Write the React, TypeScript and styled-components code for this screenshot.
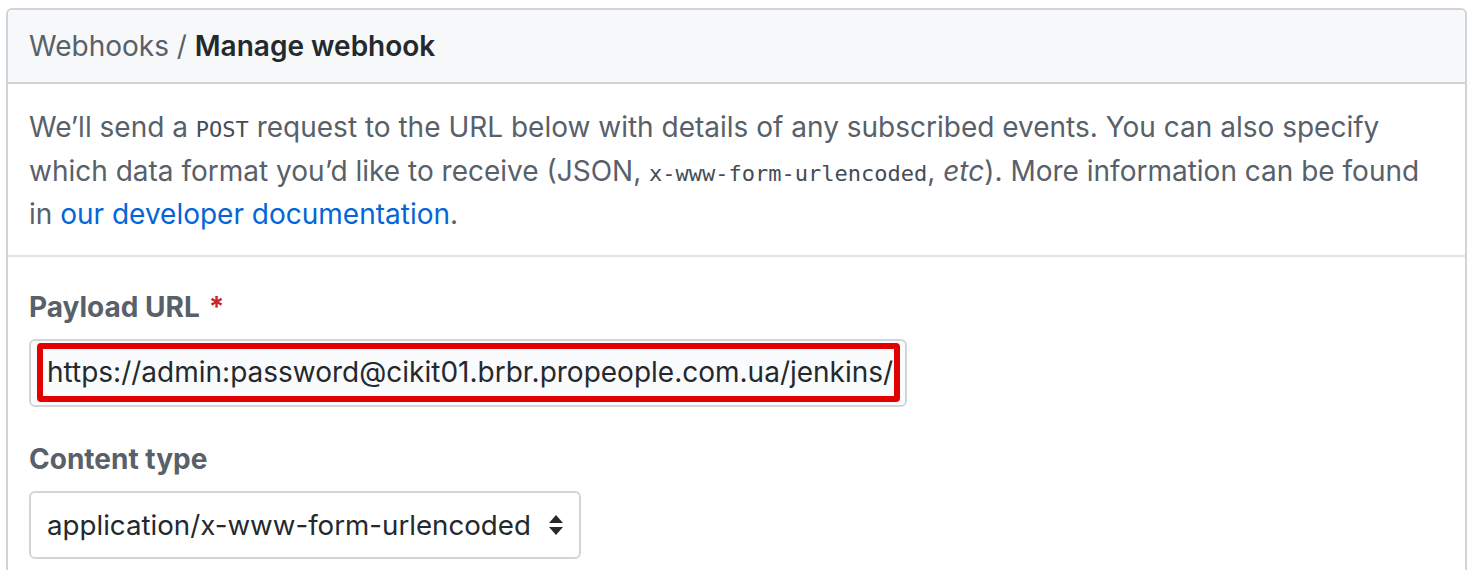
import React from "react";
import styled, { createGlobalStyle } from "styled-components";

const Global = createGlobalStyle`
  html, body { margin: 0; padding: 0; background: #ffffff; }
  body { font-family: Inter, "Liberation Sans", sans-serif; -webkit-font-smoothing: antialiased; }
`;

const Page = styled.div`
  padding: 8px 3px 0 6px;
  height: 570px;
  box-sizing: border-box;
  overflow: hidden;
`;

const Box = styled.div`
  border: 2px solid #d1d5da;
  border-radius: 6px;
  background: #fff;
  min-height: 640px;
`;

const Header = styled.div`
  background: #f6f8fa;
  border-bottom: 2px solid #d1d5da;
  border-radius: 6px 6px 0 0;
  height: 72px;
  display: flex;
  align-items: center;
  padding: 0 21px;
  font-size: 28px;
  color: #586069;
`;

const Strong = styled.strong`
  color: #24292e;
  font-weight: 600;
`;

const Section = styled.div<{ $divider?: boolean }>`
  padding: ${(p) => (p.$divider ? "22px 30px 18px 21px" : "30px 21px 0")};
  border-bottom: ${(p) => (p.$divider ? "2px solid #e1e4e8" : "none")};
`;

const Description = styled.p`
  margin: 0;
  font-size: 28px;
  line-height: 43.5px;
  color: #586069;
`;

const Code = styled.code`
  font-family: "DejaVu Sans Mono", monospace;
  font-size: 22px;
  line-height: 1;
  color: #444d56;
`;

const Link = styled.a`
  color: #0366d6;
  text-decoration: none;
`;

const Field = styled.div`
  display: flex;
  flex-direction: column;
  align-items: flex-start;
  & + & {
    margin-top: 32px;
  }
`;

const Label = styled.label`
  font-size: 28px;
  font-weight: 700;
  line-height: 40px;
  color: #586069;
  margin-bottom: 12px;
`;

const Required = styled.span`
  color: #cb2431;
  margin-left: 9px;
`;

const InputFrame = styled.div`
  width: 878px;
  height: 68px;
  box-sizing: border-box;
  border: 2px solid #d1d5da;
  border-radius: 6px;
  background: #fafbfc;
  padding: 2px 5px 3px 6px;
`;

const Highlight = styled.div`
  height: 100%;
  box-sizing: border-box;
  border: 6px solid #e30000;
  border-radius: 4px;
  background: #fafbfc;
  display: flex;
  align-items: center;
  padding-left: 4px;
  overflow: hidden;
  white-space: nowrap;
  font-size: 28px;
  color: #24292e;
`;

const Select = styled.div`
  width: 552px;
  height: 68px;
  box-sizing: border-box;
  border: 2px solid #d1d5da;
  border-radius: 6px;
  background: #fff;
  display: flex;
  align-items: center;
  justify-content: space-between;
  padding: 0 14px 0 16px;
  font-size: 27.7px;
  color: #24292e;
`;

const Arrows = styled.svg`
  width: 18px;
  height: 22px;
  flex: none;
`;

export default function App() {
  return (
    <>
      <Global />
      <Page>
        <Box>
          <Header>
            Webhooks&nbsp;/&nbsp;<Strong>Manage webhook</Strong>
          </Header>
          <Section $divider>
            <Description>
              We’ll send a <Code>POST</Code> request to the URL below with details of any subscribed
              events. You can also specify which data format you’d like to receive (JSON,{" "}
              <Code>x-www-form-urlencoded</Code>, <em>etc</em>). More information can be found in{" "}
              <Link href="#">our developer documentation</Link>.
            </Description>
          </Section>
          <Section>
            <Field>
              <Label>
                Payload URL<Required>*</Required>
              </Label>
              <InputFrame>
                <Highlight>https://admin:password@cikit01.brbr.propeople.com.ua/jenkins/github-webhook/</Highlight>
              </InputFrame>
            </Field>
            <Field>
              <Label>Content type</Label>
              <Select>
                application/x-www-form-urlencoded
                <Arrows viewBox="0 0 18 22">
                  <path d="M9 1 L16 9 H2 Z" fill="#24292e" />
                  <path d="M9 21 L16 13 H2 Z" fill="#24292e" />
                </Arrows>
              </Select>
            </Field>
          </Section>
        </Box>
      </Page>
    </>
  );
}
